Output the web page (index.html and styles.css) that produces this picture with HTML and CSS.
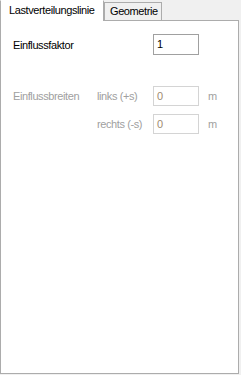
FILE: index.html
```html
<!DOCTYPE html>
<html>
<head>
  <title>Lastverteilungslinie</title>
  <link rel="stylesheet" href="styles.css">
</head>
<body>
  <div class="tabs">
    <div class="tab active">Lastverteilungslinie</div>
    <div class="tab">Geometrie</div>
  </div>
  <div class="panel">
    <div class="row first">
      <span class="label wide">Einflussfaktor</span>
      <div class="field">1</div>
    </div>
    <div class="row group">
      <span class="label off">Einflussbreiten</span>
      <span class="sub off">links (+s)</span>
      <div class="field off">0</div>
      <span class="unit off">m</span>
    </div>
    <div class="row">
      <span class="label"></span>
      <span class="sub off">rechts (-s)</span>
      <div class="field off">0</div>
      <span class="unit off">m</span>
    </div>
  </div>
</body>
</html>
```

FILE: styles.css
```css
body {
  margin: 0;
  width: 241px;
  height: 375px;
  background-color: #f0f0f0;
  font-family: "Liberation Sans", Arial, sans-serif;
  font-size: 11px;
  letter-spacing: -0.4px;
  color: #000;
}

.tabs {
  display: flex;
  align-items: flex-end;
  height: 20px;
  position: relative;
  z-index: 2;
}

.tab {
  box-sizing: border-box;
  height: 18px;
  padding: 0 4px;
  line-height: 16px;
  border: 1px solid #acacac;
  border-bottom: none;
  background-color: #f0f0f0;
  white-space: nowrap;
}

.tab.active {
  width: 104px;
  height: 21px;
  margin-bottom: -1px;
  padding: 2px 0 0 8px;
  line-height: 15px;
  background-color: #fff;
  border-top-color: #fff;
}

.tab + .tab {
  width: 58px;
  padding-left: 5px;
}

.panel {
  box-sizing: border-box;
  width: 239px;
  height: 354px;
  background-color: #fff;
  border: 1px solid #acacac;
  padding: 13px 0 0 12px;
}

.row {
  display: flex;
  align-items: center;
  height: 20px;
}

.row.first {
  height: 21px;
}

.row.group {
  margin-top: 31px;
  margin-bottom: 8px;
}

.label {
  width: 84px;
}

.label.wide {
  width: 140px;
}

.sub {
  width: 56px;
}

.off {
  color: #a0a0a0;
}

.field {
  box-sizing: border-box;
  width: 46px;
  height: 100%;
  border: 1px solid #a0a0a0;
  padding: 0 3px;
  line-height: 18px;
}

.field.off {
  border-color: #d4d4d4;
  color: #a08a70;
}

.unit {
  margin-left: 9px;
}
```
